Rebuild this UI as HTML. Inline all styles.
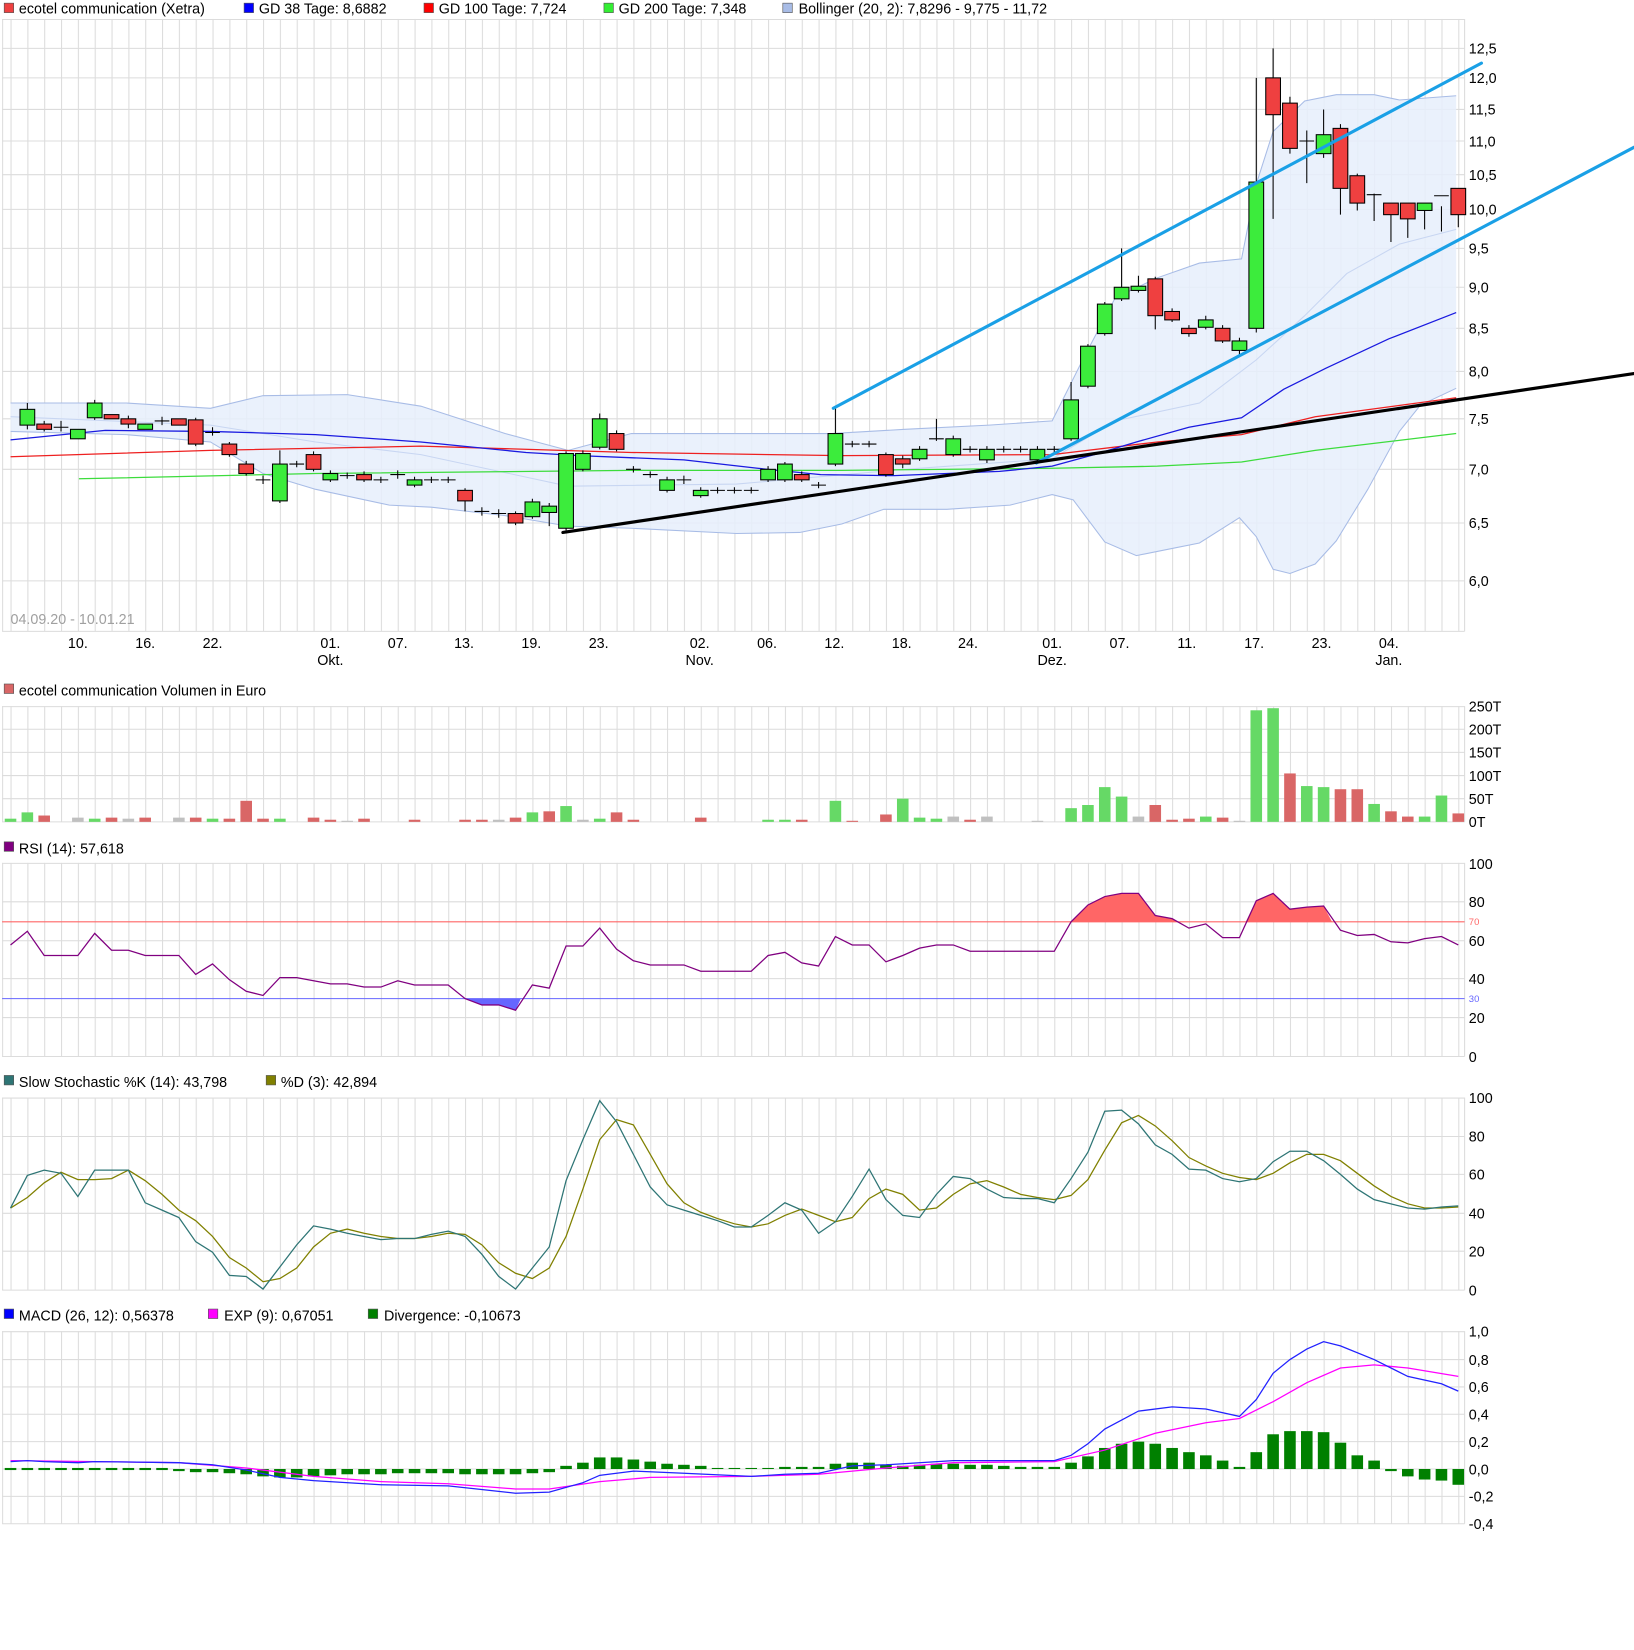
<!DOCTYPE html>
<html><head><meta charset="utf-8"><style>
html,body{margin:0;padding:0;background:#fff;width:1634px;height:1650px;overflow:hidden}
svg{display:block}
text{font-family:"Liberation Sans",sans-serif;font-size:13.6px;fill:#000}
</style></head><body>
<svg width="1634" height="1650" viewBox="0 0 1553 1568" preserveAspectRatio="none" xmlns="http://www.w3.org/2000/svg">
<defs>
<pattern id="vg" x="10" y="0" width="16" height="20" patternUnits="userSpaceOnUse"><rect x="0" y="0" width="1" height="20" fill="#dcdcdc"/></pattern>
</defs>
<rect width="1553" height="1568" fill="#fff"/>

<!-- legend -->
<rect x="4" y="3" width="9" height="9" fill="#ef4040" stroke="#555" stroke-width="0.6"/><text x="18" y="13">ecotel communication (Xetra)</text>
<rect x="232" y="3" width="9" height="9" fill="#0000ff" stroke="#555" stroke-width="0.6"/><text x="246" y="13">GD 38 Tage: 8,6882</text>
<rect x="403" y="3" width="9" height="9" fill="#ff0000" stroke="#555" stroke-width="0.6"/><text x="417" y="13">GD 100 Tage: 7,724</text>
<rect x="574" y="3" width="9" height="9" fill="#33ee33" stroke="#555" stroke-width="0.6"/><text x="588" y="13">GD 200 Tage: 7,348</text>
<rect x="744" y="3" width="9" height="9" fill="#a8bce6" stroke="#555" stroke-width="0.6"/><text x="759" y="13">Bollinger (20, 2): 7,8296 - 9,775 - 11,72</text>

<!-- main grid -->
<rect x="2" y="18" width="1390" height="582" fill="url(#vg)"/>
<g stroke="#dcdcdc" stroke-width="1">
<line x1="2" x2="1392" y1="18.5" y2="18.5"/><line x1="2" x2="1392" y1="46" y2="46"/><line x1="2" x2="1392" y1="74" y2="74"/><line x1="2" x2="1392" y1="104" y2="104"/><line x1="2" x2="1392" y1="134" y2="134"/><line x1="2" x2="1392" y1="166" y2="166"/><line x1="2" x2="1392" y1="199" y2="199"/><line x1="2" x2="1392" y1="236" y2="236"/><line x1="2" x2="1392" y1="273" y2="273"/><line x1="2" x2="1392" y1="312" y2="312"/><line x1="2" x2="1392" y1="353" y2="353"/><line x1="2" x2="1392" y1="398" y2="398"/><line x1="2" x2="1392" y1="446" y2="446"/><line x1="2" x2="1392" y1="497" y2="497"/><line x1="2" x2="1392" y1="552" y2="552"/><line x1="2" x2="1392" y1="600" y2="600"/>
<line x1="2.5" x2="2.5" y1="18" y2="600"/><line x1="1392" x2="1392" y1="18" y2="600"/>
</g>
<g>
<text x="1396" y="51">12,5</text><text x="1396" y="79">12,0</text><text x="1396" y="109">11,5</text><text x="1396" y="139">11,0</text><text x="1396" y="171">10,5</text><text x="1396" y="204">10,0</text><text x="1396" y="241">9,5</text><text x="1396" y="278">9,0</text><text x="1396" y="317">8,5</text><text x="1396" y="358">8,0</text><text x="1396" y="403">7,5</text><text x="1396" y="451">7,0</text><text x="1396" y="502">6,5</text><text x="1396" y="557">6,0</text>
</g>
<text x="10" y="593" style="fill:#a0a0a0">04.09.20 - 10.01.21</text>
<g text-anchor="middle">
<text x="74" y="616">10.</text><text x="138" y="616">16.</text><text x="202" y="616">22.</text><text x="314" y="616">01.</text><text x="314" y="632">Okt.</text><text x="378" y="616">07.</text><text x="441" y="616">13.</text><text x="505" y="616">19.</text><text x="569" y="616">23.</text><text x="665" y="616">02.</text><text x="665" y="632">Nov.</text><text x="729" y="616">06.</text><text x="793" y="616">12.</text><text x="857" y="616">18.</text><text x="920" y="616">24.</text><text x="1000" y="616">01.</text><text x="1000" y="632">Dez.</text><text x="1064" y="616">07.</text><text x="1128" y="616">11.</text><text x="1192" y="616">17.</text><text x="1256" y="616">23.</text><text x="1320" y="616">04.</text><text x="1320" y="632">Jan.</text>
</g>

<!-- bollinger -->
<path d="M10,383 L120,383 200,388 250,376 330,375 400,386 480,412 540,428 600,412 700,412 790,412 860,408 940,404 1000,400 1030,340 1060,283 1100,264 1140,250 1180,246 1194,175 1210,125 1240,96 1270,90 1306,90 1330,95 1384,91 L1384,369 1350,385 1330,410 1300,465 1270,514 1250,536 1226,545 1210,541 1194,510 1178,492 1140,516 1110,522 1080,528 1050,515 1020,475 1000,470 960,480 900,484 840,484 800,498 760,506 700,507 600,502 540,500 480,490 410,482 370,480 300,465 250,450 200,420 120,413 10,410 Z" fill="#e6eefc" fill-opacity="0.85"/>
<g fill="none" stroke="#a8bce6" stroke-width="1">
<path d="M10,383 L120,383 200,388 250,376 330,375 400,386 480,412 540,428 600,412 700,412 790,412 860,408 940,404 1000,400 1030,340 1060,283 1100,264 1140,250 1180,246 1194,175 1210,125 1240,96 1270,90 1306,90 1330,95 1384,91"/>
<path d="M10,410 L120,413 200,420 250,450 300,465 370,480 410,482 480,490 540,500 600,502 700,507 760,506 800,498 840,484 900,484 960,480 1000,470 1020,475 1050,515 1080,528 1110,522 1140,516 1178,492 1194,510 1210,541 1226,545 1250,536 1270,514 1300,465 1330,410 1350,385 1384,369"/>
<path stroke="#c8d6f2" d="M10,396 L200,404 300,420 400,432 540,462 700,460 860,446 1000,436 1060,400 1140,383 1194,342 1240,300 1280,260 1330,232 1384,218"/>
</g>
<!-- moving averages -->
<g fill="none" stroke-width="1.2">
<path stroke="#3cdc3c" d="M75,455 L300,450 600,447 800,447 1000,445 1100,443 1180,439 1250,428 1384,412"/>
<path stroke="#ee2020" d="M10,434 L200,428 400,424 600,430 800,433 1000,432 1100,420 1180,413 1250,396 1384,378"/>
<path stroke="#1a1ae0" d="M10,418 L100,409 200,410 300,413 400,420 500,430 550,433 650,437 720,445 780,451 850,452 950,448 1000,443 1040,432 1080,420 1130,406 1180,397 1220,370 1260,350 1320,322 1384,297"/>
</g>

<!-- candles -->
<g stroke="#000" stroke-width="1">
<!-- wicks -->
<path d="M26,383V408M42,400V410M90,380V399M122,395V407M186,397V424M218,420V434M234,438V452M266,428V478M298,429V448M314,447V458M346,448V458M394,453V463M442,464V486M490,486V499M506,474V493M522,478V500M538,429V504M554,428V448M570,393V427M586,409V429M634,453V468M666,463V473M730,443V458M746,439V458M762,448V458M794,388V443M842,430V453M858,433V445M874,424V438M890,398V419M906,414V434M938,424V440M986,424V439M1018,363V419M1034,327V369M1050,287V319M1066,236V286M1082,262V278M1098,263V313M1114,293V306M1130,309V320M1146,300V313M1162,309V326M1178,321V337M1194,74V316M1210,46V208M1226,92V146M1242,124V174M1258,104V150M1274,118V204M1290,165V200M1306,184V210M1322,200V230M1338,200V226M1354,200V218M1370,196V220M1386,186V216M1242,134V134M58,400V410M154,396V404M202,406V414M250,452V460M282,438V444M330,449V455M362,453V459M378,447V455M410,453V459M426,453V459M458,482V490M474,484V492M602,443V449M618,448V454M650,452V460M682,463V469M698,463V469M714,463V469M778,458V464M810,419V425M826,419V425M922,424V430M954,424V430M970,424V430M1002,424V430M1306,188V204"/>
<!-- dashes -->
<path d="M51,406H65M147,400H161M195,411H209M243,456H257M275,441H289M323,452H337M355,456H369M371,451H385M403,456H417M419,456H433M451,486H465M467,488H481M595,446H609M611,451H625M643,456H657M675,466H689M691,466H705M707,466H721M771,461H785M803,422H817M819,422H833M883,417H897M915,427H929M947,427H961M963,427H977M995,427H1009M1235,134H1249M1299,185H1313M1363,186H1377"/>
</g>
<g stroke="#000" stroke-width="1" fill="#3cec3c">
<rect x="19" y="389" width="14" height="15"/><rect x="67" y="408" width="14" height="9"/><rect x="83" y="383" width="14" height="14"/><rect x="131" y="403" width="14" height="5"/><rect x="259" y="441" width="14" height="35"/><rect x="307" y="450" width="14" height="6"/><rect x="387" y="456" width="14" height="5"/><rect x="499" y="477" width="14" height="14"/><rect x="515" y="481" width="14" height="6"/><rect x="531" y="431" width="14" height="71"/><rect x="547" y="431" width="14" height="15"/><rect x="563" y="398" width="14" height="27"/><rect x="627" y="456" width="14" height="10"/><rect x="659" y="466" width="14" height="5"/><rect x="723" y="446" width="14" height="10"/><rect x="739" y="441" width="14" height="15"/><rect x="787" y="412" width="14" height="29"/><rect x="867" y="427" width="14" height="9"/><rect x="899" y="417" width="14" height="15"/><rect x="931" y="427" width="14" height="10"/><rect x="979" y="427" width="14" height="10"/><rect x="1011" y="380" width="14" height="37"/><rect x="1027" y="329" width="14" height="38"/><rect x="1043" y="289" width="14" height="28"/><rect x="1059" y="273" width="14" height="11"/><rect x="1075" y="272" width="14" height="4"/><rect x="1139" y="304" width="14" height="7"/><rect x="1171" y="324" width="14" height="9"/><rect x="1187" y="173" width="14" height="139"/><rect x="1251" y="128" width="14" height="18"/><rect x="1347" y="193" width="14" height="7"/>
</g>
<g stroke="#000" stroke-width="1" fill="#ef4040">
<rect x="35" y="403" width="14" height="5"/><rect x="99" y="394" width="14" height="4"/><rect x="115" y="398" width="14" height="5"/><rect x="163" y="398" width="14" height="6"/><rect x="179" y="399" width="14" height="23"/><rect x="211" y="422" width="14" height="10"/><rect x="227" y="441" width="14" height="9"/><rect x="291" y="432" width="14" height="14"/><rect x="339" y="451" width="14" height="5"/><rect x="435" y="466" width="14" height="10"/><rect x="483" y="488" width="14" height="9"/><rect x="579" y="412" width="14" height="15"/><rect x="755" y="451" width="14" height="5"/><rect x="835" y="432" width="14" height="19"/><rect x="851" y="436" width="14" height="5"/><rect x="1091" y="265" width="14" height="35"/><rect x="1107" y="296" width="14" height="8"/><rect x="1123" y="312" width="14" height="5"/><rect x="1155" y="312" width="14" height="12"/><rect x="1203" y="74" width="14" height="35"/><rect x="1219" y="98" width="14" height="43"/><rect x="1267" y="122" width="14" height="57"/><rect x="1283" y="167" width="14" height="26"/><rect x="1315" y="193" width="14" height="11"/><rect x="1331" y="193" width="14" height="15"/><rect x="1379" y="179" width="14" height="25"/>
</g>

<!-- trendlines -->
<g stroke-width="3" fill="none" stroke-linecap="round">
<line x1="792" y1="388" x2="1408" y2="60" stroke="#1aa0e6"/>
<line x1="985" y1="440" x2="1553" y2="140" stroke="#1aa0e6"/>
<line x1="535" y1="506" x2="1553" y2="355" stroke="#000"/>
</g>

<!-- VOLUME -->
<rect x="4" y="650" width="9" height="9" fill="#d96666" stroke="#555" stroke-width="0.6"/><text x="18" y="661">ecotel communication Volumen in Euro</text>
<rect x="2" y="671" width="1390" height="110" fill="url(#vg)"/>
<g stroke="#dcdcdc"><line x1="2" x2="1392" y1="671.5" y2="671.5"/><line x1="2" x2="1392" y1="693" y2="693"/><line x1="2" x2="1392" y1="715" y2="715"/><line x1="2" x2="1392" y1="737" y2="737"/><line x1="2" x2="1392" y1="759" y2="759"/><line x1="2" x2="1392" y1="781" y2="781"/><line x1="2.5" x2="2.5" y1="671" y2="781"/><line x1="1392" x2="1392" y1="671" y2="781"/></g>
<text x="1396" y="676">250T</text><text x="1396" y="698">200T</text><text x="1396" y="720">150T</text><text x="1396" y="742">100T</text><text x="1396" y="764">50T</text><text x="1396" y="786">0T</text>
<g fill="#66d966">
<rect x="4.5" y="778" width="11" height="3"/><rect x="20.5" y="772" width="11" height="9"/><rect x="84.5" y="778" width="11" height="3"/><rect x="196.5" y="778" width="11" height="3"/><rect x="260.5" y="778" width="11" height="3"/><rect x="500.5" y="772" width="11" height="9"/><rect x="532.5" y="766" width="11" height="15"/><rect x="564.5" y="778" width="11" height="3"/><rect x="724.5" y="779" width="11" height="2"/><rect x="740.5" y="779" width="11" height="2"/><rect x="788.5" y="761" width="11" height="20"/><rect x="852.5" y="759" width="11" height="22"/><rect x="868.5" y="777" width="11" height="4"/><rect x="884.5" y="778" width="11" height="3"/><rect x="1012.5" y="768" width="11" height="13"/><rect x="1028.5" y="765" width="11" height="16"/><rect x="1044.5" y="748" width="11" height="33"/><rect x="1060.5" y="757" width="11" height="24"/><rect x="1140.5" y="776" width="11" height="5"/><rect x="1188.5" y="675" width="11" height="106"/><rect x="1204.5" y="673" width="11" height="108"/><rect x="1236.5" y="747" width="11" height="34"/><rect x="1252.5" y="748" width="11" height="33"/><rect x="1300.5" y="764" width="11" height="17"/><rect x="1348.5" y="776" width="11" height="5"/><rect x="1364.5" y="756" width="11" height="25"/>
</g>
<g fill="#d96666">
<rect x="36.5" y="775" width="11" height="6"/><rect x="100.5" y="777" width="11" height="4"/><rect x="132.5" y="777" width="11" height="4"/><rect x="180.5" y="777" width="11" height="4"/><rect x="212.5" y="778" width="11" height="3"/><rect x="228.5" y="761" width="11" height="20"/><rect x="244.5" y="778" width="11" height="3"/><rect x="292.5" y="777" width="11" height="4"/><rect x="308.5" y="779" width="11" height="2"/><rect x="340.5" y="778" width="11" height="3"/><rect x="388.5" y="779" width="11" height="2"/><rect x="436.5" y="779" width="11" height="2"/><rect x="452.5" y="779" width="11" height="2"/><rect x="484.5" y="777" width="11" height="4"/><rect x="516.5" y="771" width="11" height="10"/><rect x="580.5" y="772" width="11" height="9"/><rect x="596.5" y="779" width="11" height="2"/><rect x="660.5" y="777" width="11" height="4"/><rect x="756.5" y="779" width="11" height="2"/><rect x="804.5" y="780" width="11" height="1"/><rect x="836.5" y="774" width="11" height="7"/><rect x="916.5" y="779" width="11" height="2"/><rect x="1092.5" y="765" width="11" height="16"/><rect x="1108.5" y="779" width="11" height="2"/><rect x="1124.5" y="778" width="11" height="3"/><rect x="1156.5" y="777" width="11" height="4"/><rect x="1220.5" y="735" width="11" height="46"/><rect x="1268.5" y="750" width="11" height="31"/><rect x="1284.5" y="750" width="11" height="31"/><rect x="1316.5" y="771" width="11" height="10"/><rect x="1332.5" y="776" width="11" height="5"/><rect x="1380.5" y="773" width="11" height="8"/>
</g>
<g fill="#c0c0c0">
<rect x="68.5" y="777" width="11" height="4"/><rect x="116.5" y="778" width="11" height="3"/><rect x="164.5" y="777" width="11" height="4"/><rect x="324.5" y="780" width="11" height="1"/><rect x="468.5" y="779" width="11" height="2"/><rect x="548.5" y="779" width="11" height="2"/><rect x="900.5" y="776" width="11" height="5"/><rect x="932.5" y="776" width="11" height="5"/><rect x="980.5" y="780" width="11" height="1"/><rect x="1076.5" y="776" width="11" height="5"/><rect x="1172.5" y="780" width="11" height="1"/>
</g>

<!-- RSI -->
<rect x="4" y="800" width="9" height="9" fill="#800080" stroke="#555" stroke-width="0.6"/><text x="18" y="811">RSI (14): 57,618</text>
<rect x="2" y="820" width="1390" height="184" fill="url(#vg)"/>
<g stroke="#dcdcdc"><line x1="2" x2="1392" y1="820.5" y2="820.5"/><line x1="2" x2="1392" y1="857" y2="857"/><line x1="2" x2="1392" y1="894" y2="894"/><line x1="2" x2="1392" y1="930" y2="930"/><line x1="2" x2="1392" y1="967" y2="967"/><line x1="2" x2="1392" y1="1004" y2="1004"/><line x1="2.5" x2="2.5" y1="820" y2="1004"/><line x1="1392" x2="1392" y1="820" y2="1004"/></g>
<text x="1396" y="826">100</text><text x="1396" y="862">80</text><text x="1396" y="899">60</text><text x="1396" y="935">40</text><text x="1396" y="972">20</text><text x="1396" y="1009">0</text>
<text x="1396" y="879" style="font-size:9px;fill:#ff6666">70</text><text x="1396" y="952" style="font-size:9px;fill:#6666ff">30</text>
<path d="M1016,876 L1018,876 1034,860 1050,852 1066,849 1082,849 1098,870 1114,873 1118,876 Z" fill="#ff6666"/>
<path d="M1184,876 L1194,856 1210,849 1226,864 1242,862 1258,861 1266,876 Z" fill="#ff6666"/>
<path d="M442,949 L458,955 474,955 490,960 495,949 Z" fill="#6666ff"/>
<line x1="2" x2="1392" y1="876" y2="876" stroke="#ff6666"/>
<line x1="2" x2="1392" y1="949" y2="949" stroke="#6666ff"/>
<path fill="none" stroke="#800080" stroke-width="1.2" d="M10,898 L26,885 42,908 58,908 74,908 90,887 106,903 122,903 138,908 154,908 170,908 186,926 202,916 218,931 234,942 250,946 266,929 282,929 298,932 314,935 330,935 346,938 362,938 378,932 394,936 410,936 426,936 442,949 458,955 474,955 490,960 506,936 522,939 538,899 554,899 570,882 586,902 602,913 618,917 634,917 650,917 666,923 682,923 698,923 714,923 730,908 746,905 762,915 778,918 794,890 810,898 826,898 842,914 858,908 874,901 890,898 906,898 922,904 938,904 954,904 970,904 986,904 1002,904 1018,876 1034,860 1050,852 1066,849 1082,849 1098,870 1114,873 1130,882 1146,878 1162,891 1178,891 1194,856 1210,849 1226,864 1242,862 1258,861 1274,884 1290,889 1306,888 1322,895 1338,896 1354,892 1370,890 1386,898"/>

<!-- STOCH -->
<rect x="4" y="1022" width="9" height="9" fill="#2e7575" stroke="#555" stroke-width="0.6"/><text x="18" y="1033">Slow Stochastic %K (14): 43,798</text>
<rect x="253" y="1022" width="9" height="9" fill="#808000" stroke="#555" stroke-width="0.6"/><text x="267" y="1033">%D (3): 42,894</text>
<rect x="2" y="1043" width="1390" height="183" fill="url(#vg)"/>
<g stroke="#dcdcdc"><line x1="2" x2="1392" y1="1043.5" y2="1043.5"/><line x1="2" x2="1392" y1="1080" y2="1080"/><line x1="2" x2="1392" y1="1116" y2="1116"/><line x1="2" x2="1392" y1="1153" y2="1153"/><line x1="2" x2="1392" y1="1189" y2="1189"/><line x1="2" x2="1392" y1="1226" y2="1226"/><line x1="2.5" x2="2.5" y1="1043" y2="1226"/><line x1="1392" x2="1392" y1="1043" y2="1226"/></g>
<text x="1396" y="1048">100</text><text x="1396" y="1085">80</text><text x="1396" y="1121">60</text><text x="1396" y="1158">40</text><text x="1396" y="1194">20</text><text x="1396" y="1231">0</text>
<path fill="none" stroke="#808000" stroke-width="1.2" d="M10,1148 L26,1138 42,1124 58,1114 74,1121 90,1121 106,1120 122,1112 138,1122 154,1135 170,1150 186,1160 202,1175 218,1195 234,1205 250,1218 266,1215 282,1205 298,1185 314,1172 330,1168 346,1172 362,1175 378,1177 394,1177 410,1175 426,1172 442,1173 458,1183 474,1200 490,1210 506,1215 522,1205 538,1175 554,1130 570,1083 586,1064 602,1069 618,1097 634,1125 650,1143 666,1152 682,1158 698,1163 714,1166 730,1163 746,1155 762,1149 778,1155 794,1161 810,1157 826,1139 842,1130 858,1135 874,1150 890,1148 906,1135 922,1125 938,1122 954,1128 970,1135 986,1138 1002,1140 1018,1136 1034,1121 1050,1093 1066,1067 1082,1060 1098,1070 1114,1084 1130,1100 1146,1108 1162,1115 1178,1119 1194,1121 1210,1115 1226,1105 1242,1097 1258,1097 1274,1103 1290,1115 1306,1127 1322,1137 1338,1144 1354,1148 1370,1148 1386,1147"/>
<path fill="none" stroke="#2e7575" stroke-width="1.2" d="M10,1148 L26,1117 42,1112 58,1115 74,1137 90,1112 106,1112 122,1112 138,1143 154,1150 170,1157 186,1180 202,1190 218,1212 234,1213 250,1225 266,1204 282,1183 298,1165 314,1168 330,1172 346,1175 362,1178 378,1177 394,1177 410,1173 426,1170 442,1175 458,1192 474,1213 490,1225 506,1205 522,1185 538,1122 554,1083 570,1046 586,1066 602,1097 618,1128 634,1145 650,1150 666,1155 682,1160 698,1166 714,1166 730,1155 746,1143 762,1150 778,1172 794,1161 810,1137 826,1111 842,1140 858,1155 874,1157 890,1135 906,1118 922,1120 938,1130 954,1138 970,1139 986,1139 1002,1143 1018,1120 1034,1095 1050,1056 1066,1055 1082,1068 1098,1088 1114,1097 1130,1111 1146,1112 1162,1120 1178,1123 1194,1120 1210,1104 1226,1094 1242,1094 1258,1103 1274,1116 1290,1130 1306,1140 1322,1144 1338,1148 1354,1149 1370,1147 1386,1146"/>

<!-- MACD -->
<rect x="4" y="1244" width="9" height="9" fill="#0000ff" stroke="#555" stroke-width="0.6"/><text x="18" y="1255">MACD (26, 12): 0,56378</text>
<rect x="198" y="1244" width="9" height="9" fill="#ff00ff" stroke="#555" stroke-width="0.6"/><text x="213" y="1255">EXP (9): 0,67051</text>
<rect x="350" y="1244" width="9" height="9" fill="#008000" stroke="#555" stroke-width="0.6"/><text x="365" y="1255">Divergence: -0,10673</text>
<rect x="2" y="1265" width="1390" height="183" fill="url(#vg)"/>
<g stroke="#dcdcdc"><line x1="2" x2="1392" y1="1265.5" y2="1265.5"/><line x1="2" x2="1392" y1="1292" y2="1292"/><line x1="2" x2="1392" y1="1318" y2="1318"/><line x1="2" x2="1392" y1="1344" y2="1344"/><line x1="2" x2="1392" y1="1370" y2="1370"/><line x1="2" x2="1392" y1="1396" y2="1396"/><line x1="2" x2="1392" y1="1422" y2="1422"/><line x1="2" x2="1392" y1="1448" y2="1448"/><line x1="2.5" x2="2.5" y1="1265" y2="1448"/><line x1="1392" x2="1392" y1="1265" y2="1448"/></g>
<text x="1396" y="1270">1,0</text><text x="1396" y="1297">0,8</text><text x="1396" y="1323">0,6</text><text x="1396" y="1349">0,4</text><text x="1396" y="1375">0,2</text><text x="1396" y="1401">0,0</text><text x="1396" y="1427">-0,2</text><text x="1396" y="1453">-0,4</text>
<g fill="#008000">
<rect x="4.5" y="1395" width="11" height="2"/><rect x="20.5" y="1395" width="11" height="2"/><rect x="36.5" y="1395" width="11" height="2"/><rect x="52.5" y="1395" width="11" height="2"/><rect x="68.5" y="1395" width="11" height="2"/><rect x="84.5" y="1395" width="11" height="2"/><rect x="100.5" y="1395" width="11" height="2"/><rect x="116.5" y="1395" width="11" height="2"/><rect x="132.5" y="1395" width="11" height="2"/><rect x="148.5" y="1395" width="11" height="2"/><rect x="164.5" y="1396" width="11" height="2"/>
<rect x="180.5" y="1396" width="11" height="3"/><rect x="196.5" y="1396" width="11" height="3"/><rect x="212.5" y="1396" width="11" height="4"/><rect x="228.5" y="1396" width="11" height="5"/><rect x="244.5" y="1396" width="11" height="7"/><rect x="260.5" y="1396" width="11" height="8"/><rect x="276.5" y="1396" width="11" height="8"/><rect x="292.5" y="1396" width="11" height="7"/><rect x="308.5" y="1396" width="11" height="6"/><rect x="324.5" y="1396" width="11" height="5"/><rect x="340.5" y="1396" width="11" height="5"/><rect x="356.5" y="1396" width="11" height="5"/><rect x="372.5" y="1396" width="11" height="4"/><rect x="388.5" y="1396" width="11" height="4"/><rect x="404.5" y="1396" width="11" height="4"/><rect x="420.5" y="1396" width="11" height="4"/><rect x="436.5" y="1396" width="11" height="5"/><rect x="452.5" y="1396" width="11" height="5"/><rect x="468.5" y="1396" width="11" height="5"/><rect x="484.5" y="1396" width="11" height="5"/><rect x="500.5" y="1396" width="11" height="4"/><rect x="516.5" y="1396" width="11" height="3"/>
<rect x="532.5" y="1393" width="11" height="3"/><rect x="548.5" y="1390" width="11" height="6"/><rect x="564.5" y="1385" width="11" height="11"/><rect x="580.5" y="1385" width="11" height="11"/><rect x="596.5" y="1387" width="11" height="9"/><rect x="612.5" y="1389" width="11" height="7"/><rect x="628.5" y="1391" width="11" height="5"/><rect x="644.5" y="1392" width="11" height="4"/><rect x="660.5" y="1393" width="11" height="3"/><rect x="676.5" y="1395" width="11" height="1"/><rect x="692.5" y="1395" width="11" height="1"/><rect x="708.5" y="1395" width="11" height="1"/><rect x="724.5" y="1395" width="11" height="1"/><rect x="740.5" y="1394" width="11" height="2"/><rect x="756.5" y="1394" width="11" height="2"/><rect x="772.5" y="1394" width="11" height="2"/><rect x="788.5" y="1391" width="11" height="5"/><rect x="804.5" y="1390" width="11" height="6"/><rect x="820.5" y="1390" width="11" height="6"/><rect x="836.5" y="1392" width="11" height="4"/><rect x="852.5" y="1393" width="11" height="3"/><rect x="868.5" y="1392" width="11" height="4"/><rect x="884.5" y="1391" width="11" height="5"/><rect x="900.5" y="1391" width="11" height="5"/><rect x="916.5" y="1392" width="11" height="4"/><rect x="932.5" y="1392" width="11" height="4"/><rect x="948.5" y="1393" width="11" height="3"/><rect x="964.5" y="1394" width="11" height="2"/><rect x="980.5" y="1394" width="11" height="2"/><rect x="996.5" y="1394" width="11" height="2"/><rect x="1012.5" y="1390" width="11" height="6"/><rect x="1028.5" y="1384" width="11" height="12"/><rect x="1044.5" y="1376" width="11" height="20"/><rect x="1060.5" y="1372" width="11" height="24"/><rect x="1076.5" y="1370" width="11" height="26"/><rect x="1092.5" y="1372" width="11" height="24"/><rect x="1108.5" y="1376" width="11" height="20"/><rect x="1124.5" y="1380" width="11" height="16"/><rect x="1140.5" y="1383" width="11" height="13"/><rect x="1156.5" y="1388" width="11" height="8"/><rect x="1172.5" y="1394" width="11" height="2"/><rect x="1188.5" y="1380" width="11" height="16"/><rect x="1204.5" y="1363" width="11" height="33"/><rect x="1220.5" y="1360" width="11" height="36"/><rect x="1236.5" y="1360" width="11" height="36"/><rect x="1252.5" y="1361" width="11" height="35"/><rect x="1268.5" y="1371" width="11" height="25"/><rect x="1284.5" y="1383" width="11" height="13"/><rect x="1300.5" y="1388" width="11" height="8"/><rect x="1316.5" y="1396" width="11" height="2"/><rect x="1332.5" y="1396" width="11" height="7"/><rect x="1348.5" y="1396" width="11" height="10"/><rect x="1364.5" y="1396" width="11" height="11"/><rect x="1380.5" y="1396" width="11" height="15"/>
</g>
<path fill="none" stroke="#ff00ff" stroke-width="1.2" d="M10,1388 L170,1390 234,1395 298,1403 362,1408 426,1410 490,1415 522,1415 570,1408 618,1404 714,1403 778,1401 842,1395 906,1390 1002,1389 1050,1378 1098,1362 1146,1352 1178,1348 1210,1332 1242,1314 1274,1300 1306,1297 1338,1300 1386,1308"/>
<path fill="none" stroke="#2222ff" stroke-width="1.2" d="M10,1389 L26,1388 42,1389 74,1390 90,1389 170,1390 202,1392 234,1397 266,1404 298,1407 362,1411 426,1412 490,1419 522,1418 554,1409 570,1402 602,1398 650,1400 714,1403 746,1401 778,1400 810,1393 842,1392 906,1388 1002,1388 1018,1383 1034,1372 1050,1358 1082,1341 1114,1337 1146,1339 1178,1346 1194,1330 1210,1305 1226,1292 1242,1282 1258,1275 1274,1279 1306,1292 1338,1308 1370,1315 1386,1322"/>
</svg>
</body></html>
